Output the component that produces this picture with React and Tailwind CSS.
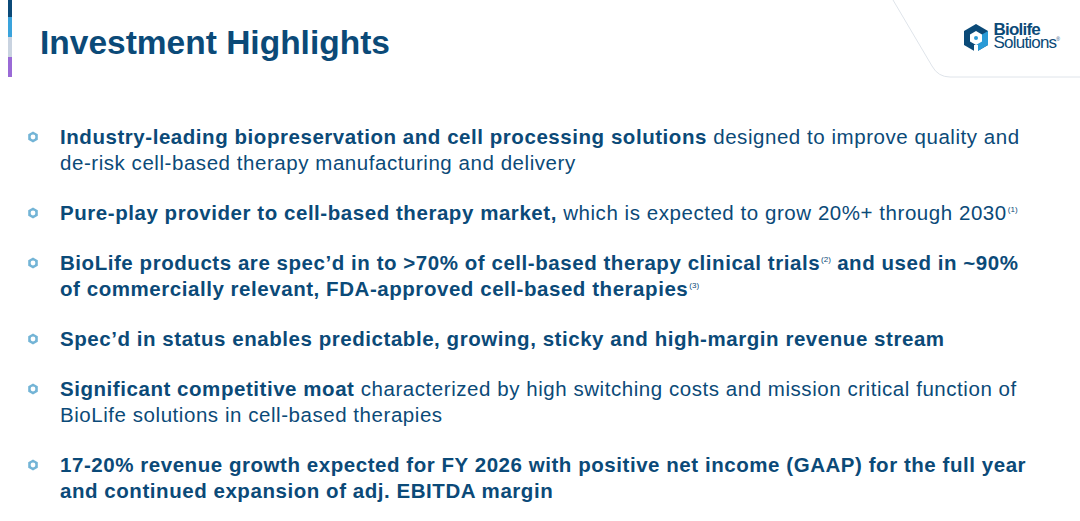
import React from "react";

const points = [
  {
    lines: (
      <>
        <b>Industry-leading biopreservation and cell processing solutions</b> designed to improve quality and de-risk cell-based therapy manufacturing and delivery
      </>
    ),
  },
  {
    lines: (
      <>
        <b>Pure-play provider to cell-based therapy market,</b> which is expected to grow 20%+ through 2030<Sup n="1" />
      </>
    ),
  },
  {
    lines: (
      <b>
        BioLife products are spec’d in to &gt;70% of cell-based therapy clinical trials<Sup n="2" /> and used in ~90% of commercially relevant, FDA-approved cell-based therapies<Sup n="3" />
      </b>
    ),
  },
  {
    lines: <b>Spec’d in status enables predictable, growing, sticky and high-margin revenue stream</b>,
  },
  {
    lines: (
      <>
        <b>Significant competitive moat</b> characterized by high switching costs and mission critical function of BioLife solutions in cell-based therapies
      </>
    ),
  },
  {
    lines: (
      <b>
        17-20% revenue growth expected for FY 2026 with positive net income (GAAP) for the full year and continued expansion of adj. EBITDA margin
      </b>
    ),
  },
];

function Sup({ n }) {
  return (
    <span className="relative -top-[8px] ml-[1px] text-[8px] leading-none font-normal tracking-normal">({n})</span>
  );
}

function HexBullet() {
  return (
    <svg width="12" height="12" viewBox="0 0 12 12" className="shrink-0">
      <path d="M6 0.5 L10.8 3.25 L10.8 8.75 L6 11.5 L1.2 8.75 L1.2 3.25 Z" fill="#73b4d6" />
      <circle cx="6" cy="6" r="2.4" fill="#ffffff" />
    </svg>
  );
}

function Logo() {
  return (
    <div className="flex items-center gap-[4px]">
      <svg width="28" height="32" viewBox="0 0 28 30">
        {/* outer hexagon, left/top dark */}
        <path d="M14 1 L26 8 L26 22 L14 29 L2 22 L2 8 Z" fill="#0b4a78" />
        {/* right lower face light blue */}
        <path d="M14 15 L26 8 L26 22 L14 29 Z" fill="#2a9ad6" />
        {/* inner white hexagon */}
        <path d="M14 8 L20 11.5 L20 18.5 L14 22 L8 18.5 L8 11.5 Z" fill="#ffffff" />
        {/* bottom notch */}
        <path d="M12 22 L16 22 L16 29 L12 29 Z" fill="#ffffff" />
        <circle cx="14" cy="15" r="2" fill="#2a9ad6" />
      </svg>
      <div className="text-[#0b4a78] font-['Liberation_Sans',Arial,sans-serif] leading-[13px] tracking-[-0.8px]">
        <div className="text-[17px] font-bold">Biolife</div>
        <div className="text-[17px]">
          Solutions<span className="relative -top-[7px] text-[5px] tracking-normal">®</span>
        </div>
      </div>
    </div>
  );
}

export default function App() {
  return (
    <div className="relative w-[1080px] h-[521px] overflow-hidden bg-white font-['Liberation_Sans',Arial,sans-serif] text-[#0b4a78]">
      {/* colour strip at the left edge */}
      <div className="absolute left-[8px] top-0 flex w-[4px] flex-col">
        <div className="h-[17px] bg-[#0b4a78]" />
        <div className="h-[20px] bg-[#3aa3dc]" />
        <div className="h-[20px] bg-[#c9d3e0]" />
        <div className="h-[20px] bg-[#9a6ad6]" />
      </div>

      {/* corner tab outline */}
      <svg className="absolute right-0 top-0" width="190" height="80" viewBox="0 0 190 80">
        <path d="M3 0 L42 66 Q48 77 60 77 L190 77" fill="none" stroke="#dfe4ea" strokeWidth="1" />
      </svg>

      <header className="relative flex items-start justify-between pl-[40px] pr-[20px] pt-[23px]">
        <h1 className="text-[33.5px] font-bold leading-[40px]">Investment Highlights</h1>
        <div className="-mt-[1px]">
          <Logo />
        </div>
      </header>

      <ul className="mt-[61px] flex flex-col gap-[24px] pl-[27px] pr-[40px]">
        {points.map((p, i) => (
          <li key={i} className="flex items-start gap-[21px]">
            <div className="pt-[7px]">
              <HexBullet />
            </div>
            <p className="text-[20.5px] leading-[26px] tracking-[0.55px]">{p.lines}</p>
          </li>
        ))}
      </ul>
    </div>
  );
}
